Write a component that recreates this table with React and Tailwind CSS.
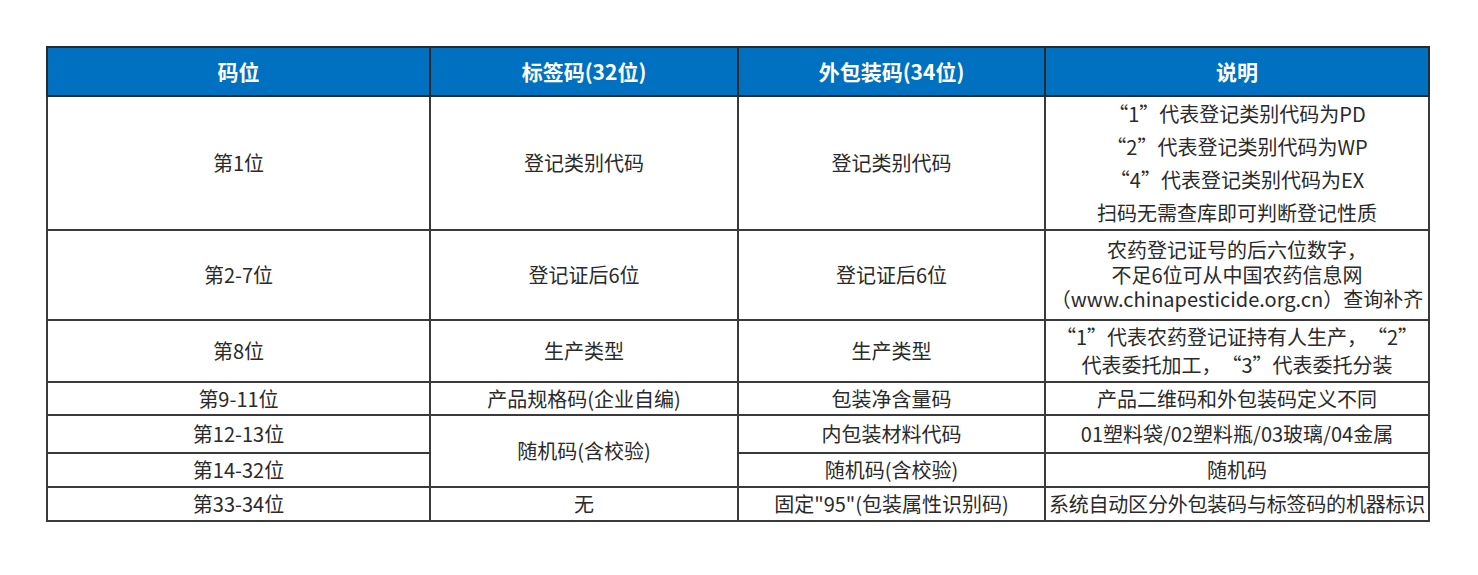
import React from 'react';

// 标签码 / 外包装码 对照表
const font = { fontFamily: '"Noto Sans CJK SC", "Noto Sans", sans-serif' };

const td = 'border-2 border-[#3a3a3a] text-center align-middle p-0 text-[20px] text-[#2a2a2a] [text-spacing-trim:space-all]';

export default function App() {
  return (
    <div className="min-h-[575px] w-[1478px] bg-white pl-[46px] pt-[46px]" style={font}>
      <table className="w-[1382px] table-fixed border-collapse border-2 border-[#1e1e1e]">
        <colgroup>
          <col className="w-[383px]" />
          <col className="w-[308px]" />
          <col className="w-[307px]" />
          <col className="w-[384px]" />
        </colgroup>
        <thead>
          <tr className="h-[49px] bg-[#0070c0]">
            {['码位', '标签码(32位)', '外包装码(34位)', '说明'].map((h) => (
              <th key={h} className="border-2 border-[#2a2a2a] text-center align-middle p-0 text-[21px] font-bold text-white">
                {h}
              </th>
            ))}
          </tr>
        </thead>
        <tbody>
          <tr className="h-[132px]">
            <td className={td}>第1位</td>
            <td className={td}>登记类别代码</td>
            <td className={td}>登记类别代码</td>
            <td className={`${td} leading-[33px]`}>
              <div>“1”代表登记类别代码为PD</div>
              <div>“2”代表登记类别代码为WP</div>
              <div>“4”代表登记类别代码为EX</div>
              <div>扫码无需查库即可判断登记性质</div>
            </td>
          </tr>
          <tr className="h-[90px]">
            <td className={td}>第2-7位</td>
            <td className={td}>登记证后6位</td>
            <td className={td}>登记证后6位</td>
            <td className={`${td} leading-[24.5px]`}>
              <div>农药登记证号的后六位数字，</div>
              <div>不足6位可从中国农药信息网</div>
              <div className="whitespace-nowrap">（www.chinapesticide.org.cn）查询补齐</div>
            </td>
          </tr>
          <tr className="h-[62px]">
            <td className={td}>第8位</td>
            <td className={td}>生产类型</td>
            <td className={td}>生产类型</td>
            <td className={`${td} leading-[28px]`}>
              <div className="whitespace-nowrap">“1”代表农药登记证持有人生产，“2”</div>
              <div>代表委托加工，“3”代表委托分装</div>
            </td>
          </tr>
          <tr className="h-[33px]">
            <td className={td}>第9-11位</td>
            <td className={td}>产品规格码(企业自编)</td>
            <td className={td}>包装净含量码</td>
            <td className={td}>产品二维码和外包装码定义不同</td>
          </tr>
          <tr className="h-[38px]">
            <td className={td}>第12-13位</td>
            <td className={td} rowSpan={2}>随机码(含校验)</td>
            <td className={td}>内包装材料代码</td>
            <td className={td}>01塑料袋/02塑料瓶/03玻璃/04金属</td>
          </tr>
          <tr className="h-[34px]">
            <td className={td}>第14-32位</td>
            <td className={td}>随机码(含校验)</td>
            <td className={td}>随机码</td>
          </tr>
          <tr className="h-[34px]">
            <td className={td}>第33-34位</td>
            <td className={td}>无</td>
            <td className={td}>固定"95"(包装属性识别码)</td>
            <td className={`${td} whitespace-nowrap tracking-[-0.2px]`}>系统自动区分外包装码与标签码的机器标识</td>
          </tr>
        </tbody>
      </table>
    </div>
  );
}
